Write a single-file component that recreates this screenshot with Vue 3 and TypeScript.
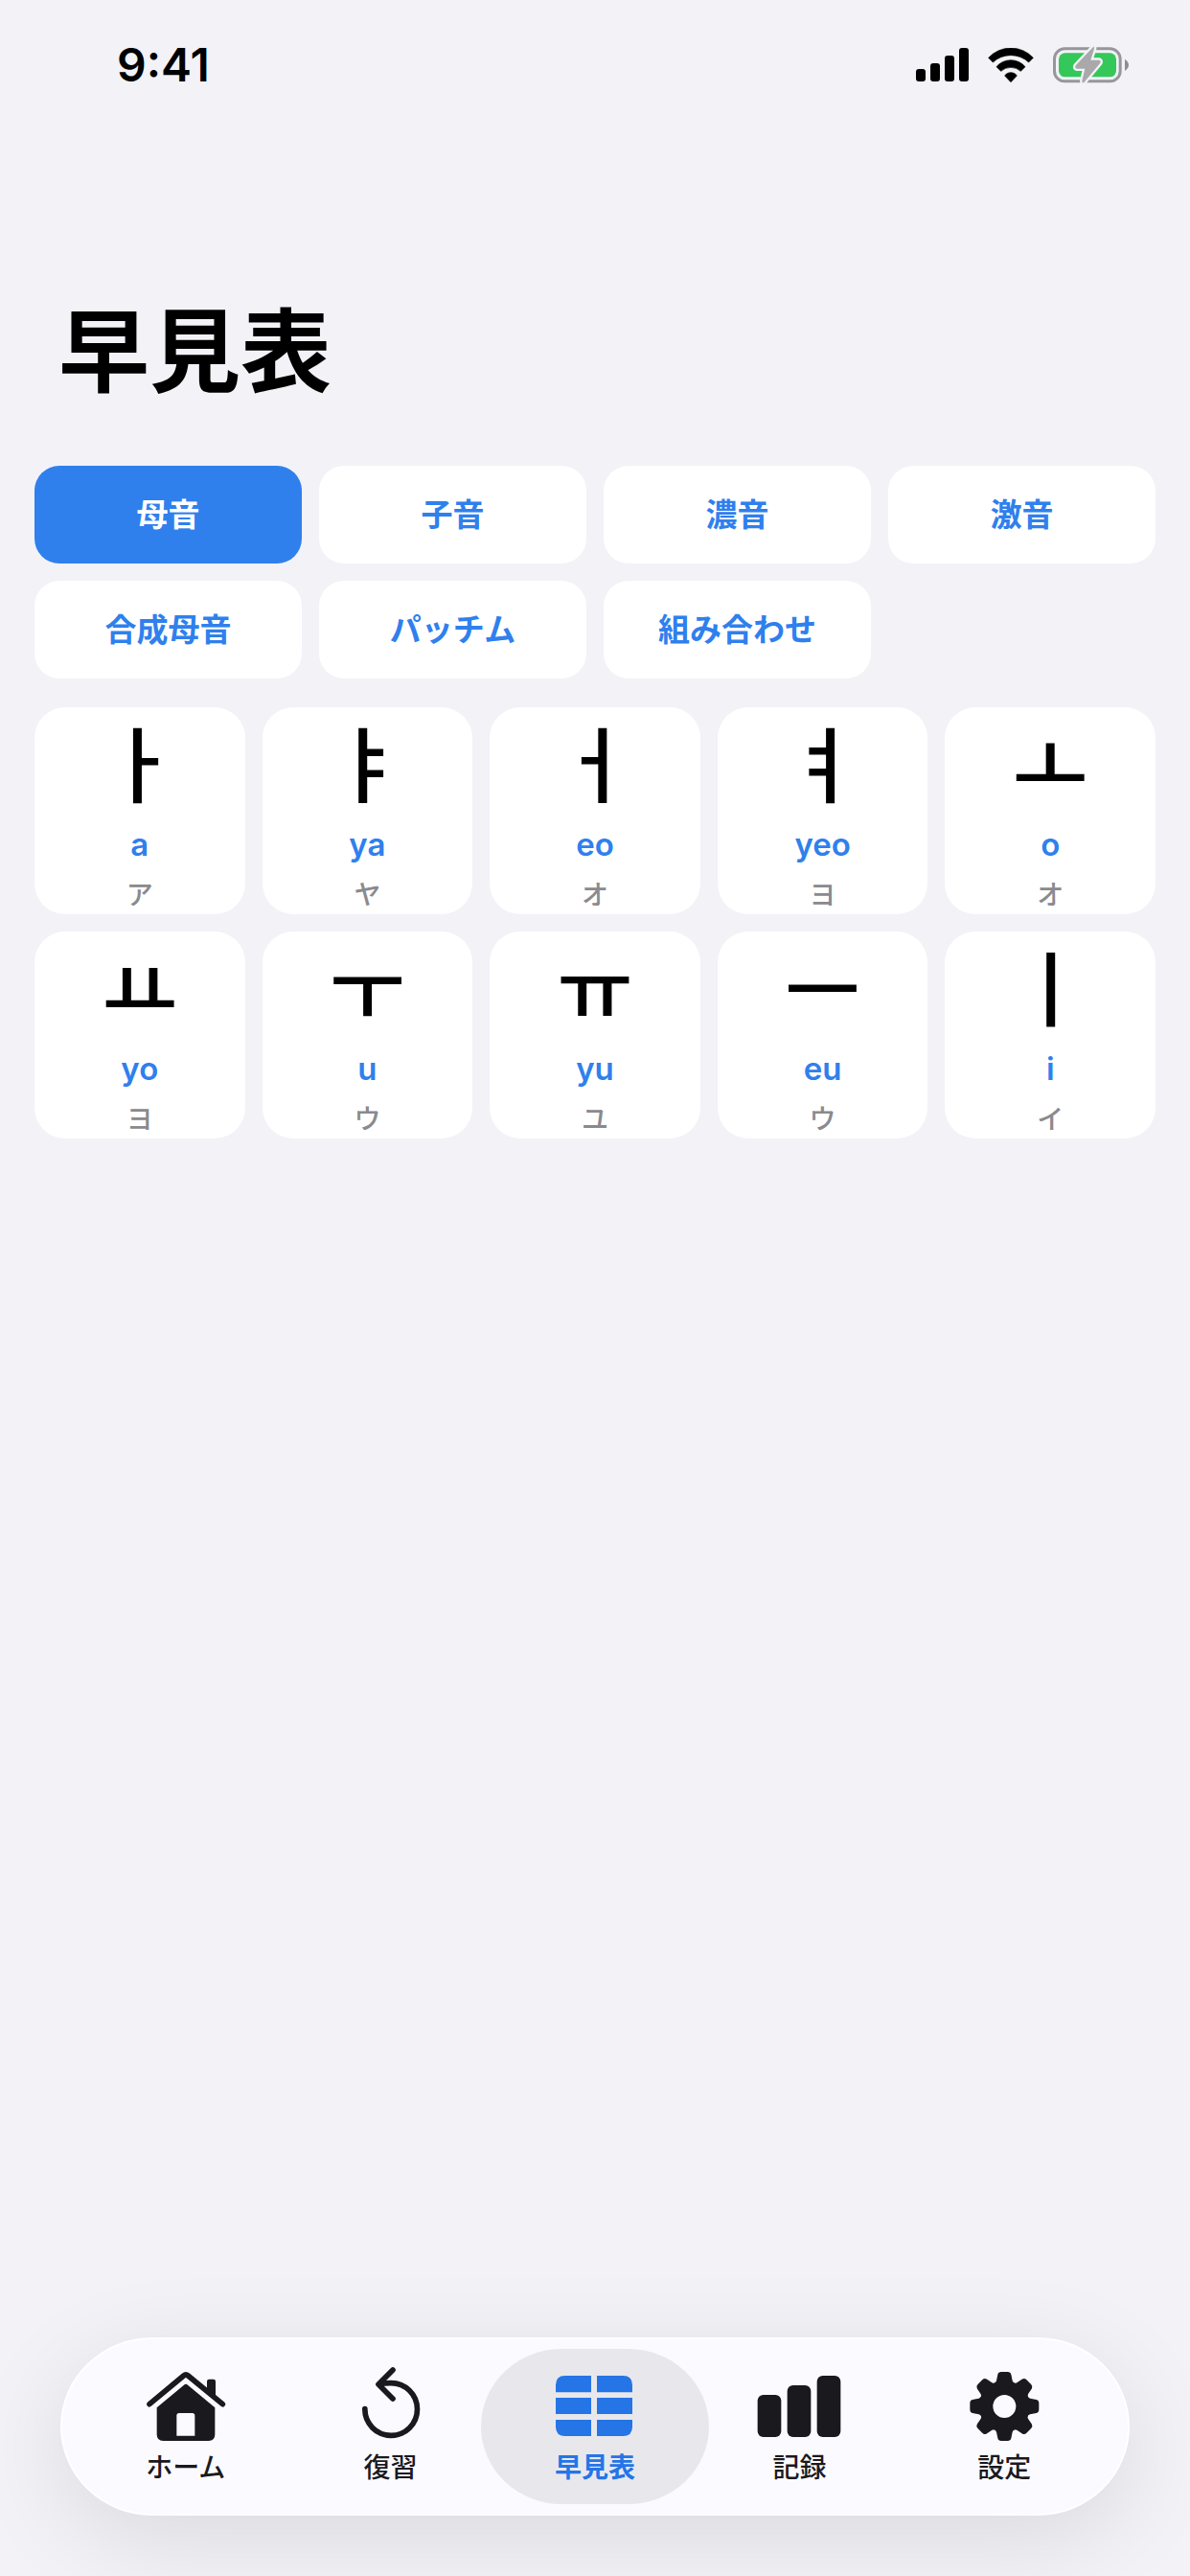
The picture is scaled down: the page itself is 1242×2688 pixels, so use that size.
<script setup lang="ts">
import { ref } from 'vue'

interface Letter {
  jamo: string
  roman: string
  kana: string
}

interface NavItem {
  id: string
  label: string
}

const categories: string[] = ['母音', '子音', '濃音', '激音', '合成母音', 'パッチム', '組み合わせ']
const category = ref('母音')

const letters: Letter[] = [
  { jamo: 'ㅏ', roman: 'a', kana: 'ア' },
  { jamo: 'ㅑ', roman: 'ya', kana: 'ヤ' },
  { jamo: 'ㅓ', roman: 'eo', kana: 'オ' },
  { jamo: 'ㅕ', roman: 'yeo', kana: 'ヨ' },
  { jamo: 'ㅗ', roman: 'o', kana: 'オ' },
  { jamo: 'ㅛ', roman: 'yo', kana: 'ヨ' },
  { jamo: 'ㅜ', roman: 'u', kana: 'ウ' },
  { jamo: 'ㅠ', roman: 'yu', kana: 'ユ' },
  { jamo: 'ㅡ', roman: 'eu', kana: 'ウ' },
  { jamo: 'ㅣ', roman: 'i', kana: 'イ' },
]

const navItems: NavItem[] = [
  { id: 'home', label: 'ホーム' },
  { id: 'review', label: '復習' },
  { id: 'chart', label: '早見表' },
  { id: 'record', label: '記録' },
  { id: 'settings', label: '設定' },
]
const page = ref('chart')

const toothAngles = [0, 45, 90, 135, 180, 225, 270, 315]
</script>

<template>
  <div class="screen" lang="ja">
    <header class="status">
      <time class="clock">9:41</time>
      <div class="indicators">
        <svg width="55" height="36" viewBox="0 0 55 36" aria-hidden="true">
          <rect x="0" y="22" width="10" height="13" rx="3" />
          <rect x="15" y="16" width="10" height="19" rx="3" />
          <rect x="30" y="8" width="10" height="27" rx="3" />
          <rect x="45" y="0" width="10" height="35" rx="3" />
        </svg>
        <svg width="48" height="36" viewBox="304 57 144 108" aria-hidden="true">
          <g stroke="#000" stroke-width="2" stroke-linejoin="round">
            <path d="M306 88A95 95 0 0 1 446 88L432 102A82 82 0 0 0 320 102Z" />
            <path d="M331 116A59 59 0 0 1 421 116L407 130A46 46 0 0 0 345 130Z" />
            <path d="M357 144A23 23 0 0 1 395 144L376 164Z" />
          </g>
        </svg>
        <svg width="79" height="40" viewBox="507 53 237 120" aria-hidden="true">
          <rect x="511.5" y="61.500" width="206" height="102" rx="32" fill="none" stroke="#97979b" stroke-width="9" />
          <rect x="525" y="75" width="180" height="75" rx="20" fill="#34c759" />
          <path d="M732 94Q744 102 744 112.500Q744 123 732 131Z" fill="#8e8e92" />
          <path
            d="M633 56L578 114Q574 123 582 124H607L598 162Q598 172 605 166L655 106Q658 98 651 97H625L636 62Q637 54 633 56Z"
            fill="#a9a9ab"
            stroke="#f2f2f7"
            stroke-width="14"
            stroke-linejoin="round"
            paint-order="stroke"
          />
        </svg>
      </div>
    </header>

    <main class="content">
      <h1 class="title">早見表</h1>

      <div class="categories">
        <button
          v-for="name in categories"
          :key="name"
          type="button"
          class="category"
          :class="{ active: name === category }"
          :aria-pressed="name === category"
          @click="category = name"
        >
          {{ name }}
        </button>
      </div>

      <ul class="letters">
        <li v-for="letter in letters" :key="letter.jamo" class="card">
          <span class="jamo" lang="ko">{{ letter.jamo }}</span>
          <span class="roman">{{ letter.roman }}</span>
          <span class="kana">{{ letter.kana }}</span>
        </li>
      </ul>
    </main>

    <nav class="tabbar">
      <a
        v-for="item in navItems"
        :key="item.id"
        href="#"
        class="tab"
        :class="{ current: item.id === page }"
        :aria-current="item.id === page ? 'page' : undefined"
        @click.prevent="page = item.id"
      >
        <svg v-if="item.id === 'home'" class="icon" viewBox="329 180 264 234" aria-hidden="true">
          <path
            d="M347 296L454 207Q461 201 468 207L576 296"
            fill="none"
            stroke="currentColor"
            stroke-width="17"
            stroke-linecap="round"
            stroke-linejoin="round"
          />
          <path d="M527 252V225Q527 218 534 218H547Q554 218 554 225V275Z" />
          <path
            fill-rule="evenodd"
            d="M370 307L455 236Q461 231 467 236L552 307V391Q552 411 532 411H390Q370 411 370 391ZM432 395H489V332Q489 324 481 324H440Q432 324 432 332Z"
          />
        </svg>
        <svg v-else-if="item.id === 'review'" class="icon" viewBox="970 180 264 234" aria-hidden="true">
          <path
            d="M1023.500 311A82 82 0 1 0 1105 230Q1086 230 1067 234M1111 189L1066 234L1111 279"
            fill="none"
            stroke="currentColor"
            stroke-width="17"
            stroke-linecap="round"
            stroke-linejoin="round"
          />
        </svg>
        <svg v-else-if="item.id === 'chart'" class="icon" viewBox="411 180 264 234" aria-hidden="true">
          <path d="M531 207V259H420V236Q420 207 449 207Z" />
          <path d="M549 207H631Q660 207 660 236V259H549Z" />
          <path d="M420 276H531V327H420Z" />
          <path d="M549 276H660V327H549Z" />
          <path d="M420 345H531V396H449Q420 396 420 367Z" />
          <path d="M549 345H660V367Q660 396 631 396H549Z" />
        </svg>
        <svg v-else-if="item.id === 'record'" class="icon" viewBox="92 180 264 234" aria-hidden="true">
          <rect x="91" y="267" width="74" height="132" rx="18" />
          <rect x="184" y="237" width="74" height="162" rx="18" />
          <rect x="277" y="207" width="74" height="192" rx="18" />
        </svg>
        <svg v-else class="icon" viewBox="733 180 264 234" aria-hidden="true">
          <circle cx="866" cy="303" r="57" fill="none" stroke="currentColor" stroke-width="42" />
          <path
            v-for="angle in toothAngles"
            :key="angle"
            d="M830 232Q839 231 841 223L845 203Q847 195 856 195H876Q885 195 887 203L891 223Q893 231 902 232L890 245H842Z"
            :transform="`rotate(${angle} 866 303)`"
          />
        </svg>
        <span class="label">{{ item.label }}</span>
      </a>
    </nav>
  </div>
</template>

<style>
body {
  margin: 0;
  background: #f2f2f7;
}
</style>

<style scoped>
.screen {
  --blue: #2f80ed;
  display: flex;
  flex-direction: column;
  box-sizing: border-box;
  min-height: 100vh;
  padding-bottom: 63px;
  overflow: hidden;
  background: #f2f2f7;
  color: #000;
  font-family: Inter, "Noto Sans CJK JP", sans-serif;
}

.status {
  display: flex;
  align-items: center;
  justify-content: space-between;
  height: 136px;
  padding: 0 64px 0 122px;
}

.clock {
  font-size: 48px;
  font-weight: 600;
  line-height: 60px;
}

.indicators {
  display: flex;
  align-items: center;
  gap: 20px;
}

.content {
  padding: 172px 36px 60px;
}

.title {
  margin: 0 0 58px;
  padding: 0 25px;
  font-size: 95px;
  font-weight: 700;
  line-height: 120px;
}

.categories {
  display: grid;
  grid-template-columns: repeat(4, 1fr);
  gap: 18px;
}

.category {
  height: 102px;
  padding: 0;
  border: 0;
  border-radius: 26px;
  background: #fff;
  color: var(--blue);
  font-family: inherit;
  font-size: 33px;
  font-weight: 700;
  line-height: 48px;
}

.category.active {
  background: var(--blue);
  color: #fff;
}

.letters {
  display: grid;
  grid-template-columns: repeat(5, 1fr);
  gap: 18px;
  margin: 30px 0 0;
  padding: 0;
  list-style: none;
}

.card {
  display: flex;
  flex-direction: column;
  align-items: center;
  padding-bottom: 2px;
  border-radius: 32px;
  background: #fff;
}

.jamo {
  font-family: "Noto Sans CJK KR", sans-serif;
  font-size: 86px;
  font-weight: 500;
  line-height: 112px;
}

.roman {
  color: var(--blue);
  font-size: 33px;
  font-weight: 600;
  line-height: 62px;
}

.kana {
  margin-top: 4px;
  color: #8a8a8e;
  font-size: 28px;
  font-weight: 500;
  line-height: 36px;
}

.tabbar {
  display: flex;
  box-sizing: border-box;
  height: 186px;
  margin: auto 63px 0;
  padding: 0 22px;
  border: 2px solid #fff;
  border-radius: 96px / 93px;
  background: #fbfbff;
  box-shadow: 0 24px 100px rgba(0, 0, 0, 0.1);
}

.tab {
  position: relative;
  display: flex;
  flex: 1;
  flex-direction: column;
  align-items: center;
  padding-top: 29px;
  color: #1a1a1e;
  text-decoration: none;
}

.tab.current {
  color: #2575e6;
}

.tab.current::before {
  content: "";
  position: absolute;
  inset: 10px -12px;
  border-radius: 84px / 81px;
  background: #e8e8ec;
}

.icon {
  position: relative;
  width: 88px;
  height: 78px;
  overflow: visible;
  fill: currentColor;
}

.label {
  position: relative;
  margin-top: 7px;
  font-size: 28px;
  font-weight: 500;
  line-height: 40px;
}

.current .label {
  font-weight: 700;
}
</style>
